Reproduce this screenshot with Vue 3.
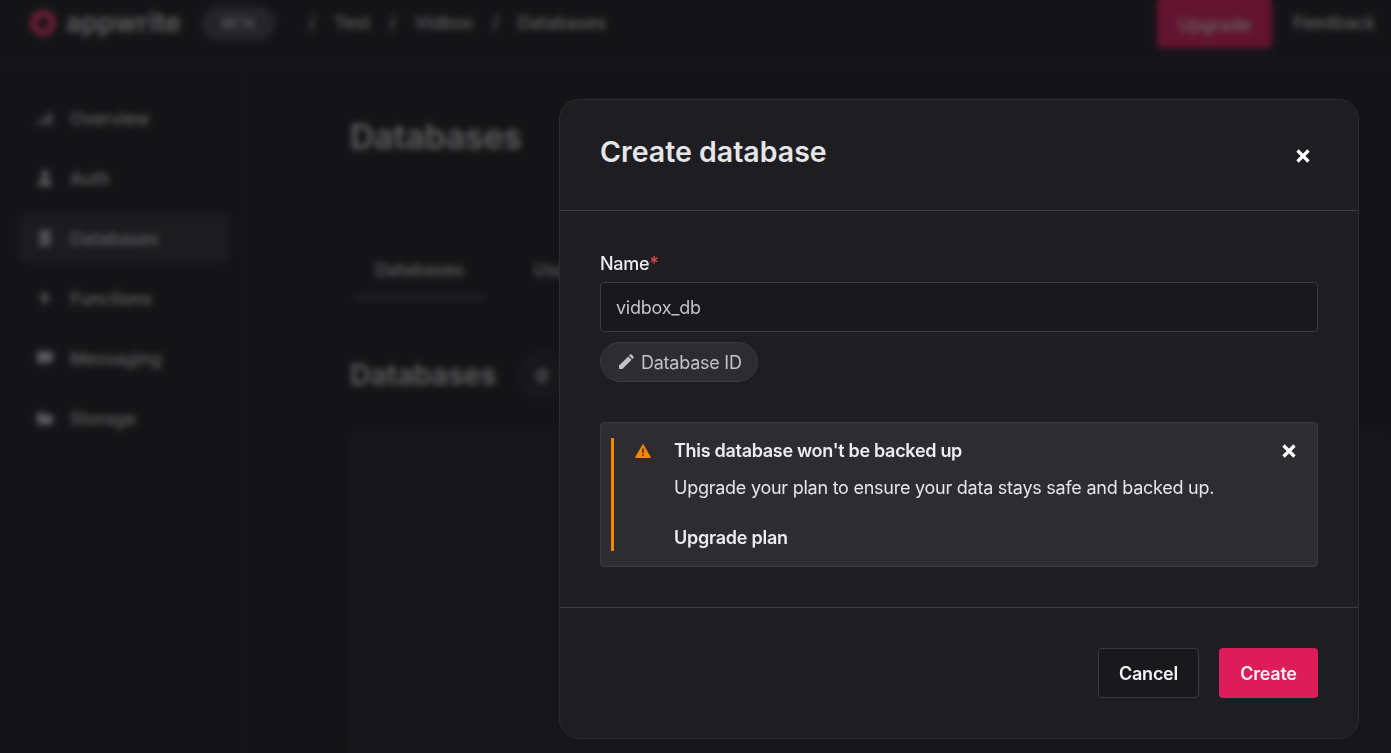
<template>
  <div class="page">
    <header class="topbar">
      <div class="logo">
        <svg class="logo-mark" viewBox="0 0 30 30" width="30" height="30">
          <circle cx="15" cy="15" r="9.5" fill="none" stroke="#fd366e" stroke-width="7" />
        </svg>
        <span class="logo-text">appwrite</span>
      </div>
      <span class="beta">BETA</span>
      <nav class="crumbs">
        <template v-for="c in crumbs" :key="c">
          <span>/</span>
          <span>{{ c }}</span>
        </template>
      </nav>
      <button class="upgrade">Upgrade</button>
      <span class="feedback">Feedback</span>
    </header>

    <div class="below">
      <aside class="side">
        <div v-for="item in nav" :key="item.label" class="side-item" :class="{ active: item.label === 'Databases' }">
          <svg viewBox="0 0 16 16" width="18" height="18">
            <path :d="item.icon" fill="#d0d0d3" />
          </svg>
          <span>{{ item.label }}</span>
        </div>
      </aside>
      <main class="main">
        <h1 class="main-title">Databases</h1>
        <div class="tabs">
          <span class="tab on">Databases</span>
          <span class="tab">Usage</span>
        </div>
        <div class="section-head">
          <h2>Databases</h2>
          <span class="count">0</span>
        </div>
        <div class="empty"></div>
      </main>
    </div>

    <div class="overlay">
      <section class="modal">
        <div class="modal-head">
          <h3>Create database</h3>
          <svg class="x" viewBox="0 0 16 16" width="16" height="16">
            <path d="M2.5 2.5l11 11M13.5 2.5l-11 11" stroke="#fff" stroke-width="3.2" />
          </svg>
        </div>

        <div class="modal-body">
          <label class="label">Name<span class="req">*</span></label>
          <div class="input">vidbox_db</div>
          <span class="pill">
            <svg viewBox="0 0 16 16" width="16" height="16">
              <path d="M1 15v-3.4L10.2 2.4l3.4 3.4L4.4 15zM11 1.6l1-1a1 1 0 0 1 1.4 0l2 2a1 1 0 0 1 0 1.4l-1 1z" fill="#c3c3c6" />
            </svg>
            Database ID
          </span>

          <div class="alert">
            <div class="alert-inner">
              <svg class="warn" viewBox="0 0 16 16" width="16" height="16">
                <path d="M8 1.5 15.5 14.5H.5z" fill="#fb8500" stroke="#fb8500" stroke-width="1" stroke-linejoin="round" />
                <path d="M8 5.6v4.4M8 11.2v1.6" stroke="#2d2d31" stroke-width="1.6" />
              </svg>
              <div class="alert-text">
                <div class="alert-title">This database won't be backed up</div>
                <p>Upgrade your plan to ensure your data stays safe and backed up.</p>
                <a class="alert-link">Upgrade plan</a>
              </div>
              <svg class="alert-x" viewBox="0 0 16 16" width="16" height="16">
                <path d="M2.5 2.5l11 11M13.5 2.5l-11 11" stroke="#fff" stroke-width="3.2" />
              </svg>
            </div>
          </div>
        </div>

        <div class="modal-foot">
          <button class="btn ghost">Cancel</button>
          <button class="btn primary">Create</button>
        </div>
      </section>
    </div>
  </div>
</template>

<script setup>
const crumbs = ['Test', 'Vidbox', 'Databases']
const nav = [
  { label: 'Overview', icon: 'M1 14v-3h3v3zM6 14V7h3v7zM11 14V3h3v11z' },
  { label: 'Auth', icon: 'M8 1a3.5 3.5 0 1 1 0 7 3.5 3.5 0 0 1 0-7zM2 15v-2a4 4 0 0 1 4-4h4a4 4 0 0 1 4 4v2z' },
  { label: 'Databases', icon: 'M3 1h10v4H3zM3 6h10v4H3zM3 11h10v4H3z' },
  { label: 'Functions', icon: 'M9 1 3 9h4l-1 6 7-8H9z' },
  { label: 'Messaging', icon: 'M1 2h14v10H7l-3 3v-3H1z' },
  { label: 'Storage', icon: 'M1 3h5l2 2h7v9H1z' }
]
</script>

<style>
html, body {
  margin: 0;
  background: #19191c;
}
</style>

<style scoped>
.page {
  position: relative;
  width: 1391px;
  height: 753px;
  overflow: hidden;
  background: #1a1a1d;
  color: #dcdcdf;
  font-family: Inter, "Noto Sans", sans-serif;
  font-size: 16px;
}

.topbar {
  height: 62px;
  display: flex;
  align-items: flex-start;
  padding: 0 16px 0 28px;
  box-sizing: border-box;
  border-bottom: 1px solid #2d2d31;
}

.logo {
  display: flex;
  align-items: center;
  gap: 8px;
  margin-top: 8px;
}

.logo-text {
  font-size: 27px;
  font-weight: 600;
  line-height: 30px;
  width: 114px;
}

.beta {
  margin: 7px 0 0 22px;
  width: 73px;
  height: 33px;
  line-height: 33px;
  text-align: center;
  border-radius: 16px;
  background: #46464c;
  font-size: 13px;
  font-weight: 500;
}

.crumbs {
  display: flex;
  gap: 19px;
  margin: 12px 0 0 34px;
  line-height: 22px;
  font-size: 17.5px;
  font-weight: 500;
}

.upgrade {
  margin-left: auto;
  width: 115px;
  height: 48px;
  border: 0;
  border-radius: 4px;
  background: #e8195f;
  color: #e6e6e8;
  font: inherit;
  font-size: 17.5px;
  font-weight: 500;
}

.feedback {
  margin: 12px 0 0 21px;
  line-height: 22px;
  font-size: 17.5px;
  font-weight: 500;
}

.below {
  display: flex;
  height: 691px;
}

.side {
  width: 245px;
  flex: none;
  box-sizing: border-box;
  padding: 32px 15px 0 20px;
  border-right: 1px solid #222226;
  display: flex;
  flex-direction: column;
  gap: 12px;
}

.side-item {
  height: 48px;
  display: flex;
  align-items: center;
  gap: 16px;
  padding-left: 16px;
  border-radius: 8px;
  font-size: 17.5px;
  font-weight: 500;
}

.side-item.active {
  background: #2d2d31;
}

.main {
  flex: 1;
  padding: 53px 0 0 105px;
}

.main-title {
  margin: 0;
  font-size: 33.5px;
  line-height: 44px;
  font-weight: 600;
}

.tabs {
  display: flex;
  gap: 30px;
  margin-top: 99px;
  padding-left: 5px;
  font-size: 17.5px;
  font-weight: 500;
}

.tab {
  padding: 0 20px 14px;
  line-height: 24px;
}

.tab.on {
  border-bottom: 2px solid #5a5a60;
}

.section-head {
  display: flex;
  align-items: center;
  gap: 23px;
  margin-top: 54px;
}

.section-head h2 {
  margin: 0;
  font-size: 28.5px;
  line-height: 40px;
  font-weight: 600;
}

.count {
  width: 46px;
  height: 46px;
  line-height: 46px;
  text-align: center;
  border-radius: 50%;
  background: #232327;
  border: 1px solid #333338;
  box-sizing: border-box;
  font-weight: 700;
  font-size: 18px;
}

.empty {
  margin-top: 30px;
  height: 400px;
  border-radius: 16px;
  background: #202024;
}

.overlay {
  position: absolute;
  inset: 0;
  background: rgba(18, 18, 20, 0.62);
  backdrop-filter: blur(3px);
  display: flex;
  justify-content: flex-end;
  align-items: flex-start;
  padding: 99px 32px 0 0;
  box-sizing: border-box;
}

.modal {
  width: 800px;
  height: 640px;
  box-sizing: border-box;
  background: #1e1e22;
  border: 1px solid #2d2d31;
  border-radius: 20px;
  display: flex;
  flex-direction: column;
  color: #e6e6e8;
}

.modal-head {
  height: 111px;
  flex: none;
  box-sizing: border-box;
  display: flex;
  justify-content: space-between;
  padding: 32px 47px 0 40px;
  border-bottom: 1px solid #3a3a3f;
}

.modal-head h3 {
  margin: 0;
  font-size: 28.5px;
  line-height: 40px;
  font-weight: 600;
}

.x {
  margin-top: 16px;
}

.modal-body {
  height: 397px;
  flex: none;
  box-sizing: border-box;
  padding: 41px 40px 0;
  border-bottom: 1px solid #3a3a3f;
  display: flex;
  flex-direction: column;
  align-items: flex-start;
  letter-spacing: -0.25px;
}

.label {
  font-size: 18px;
  line-height: 24px;
  font-weight: 500;
  color: #ededf0;
}

.req {
  color: #e5484d;
}

.input {
  margin-top: 6px;
  width: 100%;
  height: 50px;
  box-sizing: border-box;
  padding: 0 15px;
  background: #19191c;
  border: 1px solid #3a3a3f;
  border-radius: 4px;
  font-size: 18px;
  line-height: 50px;
  color: #c3c3c6;
}

.pill {
  margin-top: 10px;
  height: 40px;
  box-sizing: border-box;
  padding: 0 15px 0 17px;
  display: flex;
  align-items: center;
  gap: 7px;
  border: 1px solid #3a3a3f;
  border-radius: 20px;
  background: #2d2d31;
  font-size: 18px;
  color: #c3c3c6;
}

.alert {
  margin-top: 40px;
  width: 100%;
  height: 145px;
  box-sizing: border-box;
  background: #2d2d31;
  border: 1px solid #3a3a3f;
  border-radius: 4px;
  padding: 15px 10px;
}

.alert-inner {
  height: 113px;
  border-left: 3px solid #fb8500;
  display: flex;
  padding-left: 21px;
}

.warn {
  margin-top: 5px;
  flex: none;
}

.alert-text {
  flex: 1;
  margin-left: 23px;
}

.alert-title {
  font-size: 18px;
  font-weight: 600;
  line-height: 26px;
  color: #ededf0;
  letter-spacing: -0.3px;
}

.alert-text p {
  margin: 11px 0 0;
  font-size: 18px;
  line-height: 26px;
  color: #e6e6e8;
}

.alert-link {
  display: block;
  margin: 24px 0 0;
  font-size: 18px;
  font-weight: 600;
  line-height: 26px;
  color: #ededf0;
}

.alert-x {
  margin: 5px 10px 0 0;
  flex: none;
}

.modal-foot {
  flex: 1;
  display: flex;
  justify-content: flex-end;
  gap: 20px;
  padding: 40px 40px 0 0;
}

.btn {
  height: 50px;
  box-sizing: border-box;
  border-radius: 4px;
  font: inherit;
  font-size: 18px;
  font-weight: 600;
  letter-spacing: -0.25px;
  color: #f2f2f4;
}

.ghost {
  width: 101px;
  background: #19191c;
  border: 1px solid #3a3a3f;
}

.primary {
  width: 99px;
  background: #dc1d5a;
  border: 0;
}
</style>
